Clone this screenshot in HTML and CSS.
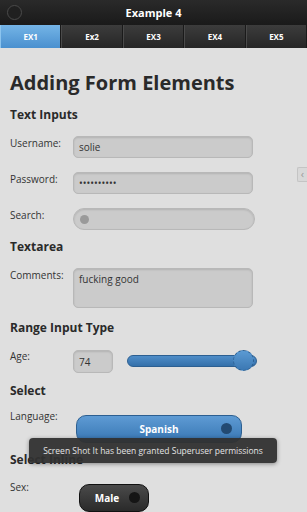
FILE: index.html
```html
<!DOCTYPE html>
<html>
<head>
    <title>Example 4</title>
    <link rel="stylesheet" href="styles.css">
</head>
<body>
    <!-- Header -->
    <div class="header">
        <span class="header-dot"></span>
        <h1>Example 4</h1>
    </div>

    <!-- Tabs -->
    <div class="tabs">
        <a href="#" class="tab active">EX1</a>
        <a href="#" class="tab">Ex2</a>
        <a href="#" class="tab">EX3</a>
        <a href="#" class="tab">EX4</a>
        <a href="#" class="tab">EX5</a>
    </div>

    <div class="content">
        <h2>Adding Form Elements</h2>

        <h3>Text Inputs</h3>
        <div class="field first">
            <label>Username:</label>
            <input type="text" class="text-input" value="solie">
        </div>
        <div class="field">
            <label>Password:</label>
            <input type="password" class="text-input" value="1234567890">
        </div>
        <div class="field">
            <label>Search:</label>
            <div class="search-input"><span class="search-dot"></span></div>
        </div>

        <h3 class="section">Textarea</h3>
        <div class="field first">
            <label>Comments:</label>
            <textarea class="textarea">fucking good</textarea>
        </div>

        <h3 class="section range-title">Range Input Type</h3>
        <div class="field first">
            <label>Age:</label>
            <input type="text" class="text-input age-input" value="74">
            <div class="slider">
                <div class="slider-track"></div>
                <span class="slider-thumb"></span>
            </div>
        </div>

        <h3 class="section select-title">Select</h3>
        <div class="field select-row">
            <label>Language:</label>
            <div class="select-btn">Spanish<span class="btn-dot"></span></div>
        </div>

        <h3 class="section">Select Inline</h3>
        <div class="field sex-row">
            <label>Sex:</label>
            <div class="inline-btn">Male<span class="btn-dot"></span></div>
        </div>
    </div>

    <!-- Side handle -->
    <div class="side-handle">&lsaquo;</div>

    <!-- Toast -->
    <div class="toast">Screen Shot It has been granted Superuser permissions</div>
</body>
</html>
```

FILE: styles.css
```css
body {
    margin: 0;
    width: 307px;
    height: 512px;
    overflow: hidden;
    background-color: #dfdfdf;
    font-family: "Open Sans", "DejaVu Sans", sans-serif;
    color: #2a2a2a;
    position: relative;
}
.header {
    height: 25px;
    background: linear-gradient(#2a2a2a, #1a1a1a);
    display: flex;
    align-items: center;
    justify-content: center;
    position: relative;
}
.header h1 {
    margin: 0;
    font-size: 11px;
    font-weight: bold;
    color: #fff;
}
.header-dot {
    position: absolute;
    left: 7px;
    top: 5px;
    width: 13px;
    height: 13px;
    border-radius: 50%;
    border: 1px solid #4a4a4a;
    background: #202020;
}
.tabs {
    display: flex;
    height: 23px;
    background: #2a2a2a;
}
.tab {
    flex: 1;
    display: flex;
    align-items: center;
    justify-content: center;
    font-size: 8px;
    font-weight: bold;
    color: #fff;
    text-decoration: none;
    background: linear-gradient(#3c3c3c, #262626);
    border-left: 1px solid #4a4a4a;
    border-right: 1px solid #1a1a1a;
}
.tab.active {
    background: linear-gradient(#74b4e6, #4a90cf);
    border-left-color: #8cc4ee;
}
.content {
    padding: 0 10px;
}
h2 {
    margin: 23px 0 0;
    font-size: 20px;
    line-height: 24px;
    font-weight: bold;
}
h3 {
    margin: 12px 0 0;
    font-size: 12px;
    line-height: 16px;
    font-weight: bold;
}
h3.section {
    margin-top: 9px;
}
h3.range-title {
    margin-top: 12px;
}
h3.select-title {
    margin-top: 10px;
}
.field {
    display: flex;
    align-items: flex-start;
    margin-top: 14px;
}
.field.first {
    margin-top: 13px;
}
.field label {
    width: 63px;
    flex-shrink: 0;
    font-size: 10px;
    line-height: 14px;
    color: #333;
}
.text-input,
.textarea {
    box-sizing: border-box;
    width: 180px;
    height: 22px;
    margin: 0;
    padding: 0 5px;
    border: 1px solid #b8b8b8;
    border-radius: 5px;
    background: #cbcbcb;
    box-shadow: inset 0 1px 2px rgba(0, 0, 0, 0.12);
    font-family: "Open Sans", "DejaVu Sans", sans-serif;
    font-size: 10px;
    color: #333;
    outline: none;
}
.textarea {
    height: 40px;
    padding: 3px 5px;
    resize: none;
    line-height: 14px;
}
.search-input {
    box-sizing: border-box;
    width: 182px;
    height: 22px;
    border: 1px solid #b8b8b8;
    border-radius: 11px;
    background: #cbcbcb;
    box-shadow: inset 0 1px 2px rgba(0, 0, 0, 0.12);
    display: flex;
    align-items: center;
    padding-left: 6px;
}
.search-dot {
    width: 9px;
    height: 9px;
    border-radius: 50%;
    background: #9a9a9a;
}
.age-input {
    width: 40px;
    height: 23px;
    margin-top: 1px;
}
.slider {
    position: relative;
    width: 130px;
    height: 23px;
    margin-left: 14px;
    margin-top: 1px;
}
.slider-track {
    box-sizing: border-box;
    margin-top: 5px;
    height: 12px;
    border-radius: 6px;
    border: 1px solid #2c5f91;
    background: linear-gradient(#4f8dc8, #3470aa);
}
.slider-thumb {
    position: absolute;
    left: 106px;
    top: 0;
    box-sizing: border-box;
    width: 21px;
    height: 21px;
    border-radius: 50%;
    border: 1px dashed #2c5f91;
    background: linear-gradient(#5b9ad3, #3b78b3);
}
.select-row {
    margin-top: 10px;
}
.select-btn {
    box-sizing: border-box;
    position: relative;
    width: 166px;
    height: 28px;
    margin: 6px 0 0 3px;
    border: 1px solid #2c5f91;
    border-radius: 10px;
    background: linear-gradient(#5e9bd4, #3876b3);
    color: #fff;
    font-size: 10px;
    font-weight: bold;
    display: flex;
    align-items: center;
    justify-content: center;
}
.btn-dot {
    position: absolute;
    right: 9px;
    top: 50%;
    width: 11px;
    height: 11px;
    margin-top: -6px;
    border-radius: 50%;
    background: #234a72;
}
.sex-row {
    margin-top: 12px;
}
.inline-btn {
    box-sizing: border-box;
    position: relative;
    width: 70px;
    height: 28px;
    margin: 4px 0 0 6px;
    padding-right: 14px;
    border: 1px solid #111;
    border-radius: 10px;
    background: linear-gradient(#4a4a4a, #2a2a2a);
    color: #fff;
    font-size: 10px;
    font-weight: bold;
    display: flex;
    align-items: center;
    justify-content: center;
}
.inline-btn .btn-dot {
    background: #151515;
    right: 8px;
}
.side-handle {
    position: absolute;
    right: 0;
    top: 167px;
    width: 9px;
    height: 13px;
    border: 1px solid #c4c4c4;
    border-right: none;
    border-radius: 2px 0 0 2px;
    background: #d8d8d8;
    color: #9a9a9a;
    font-size: 11px;
    line-height: 12px;
    text-align: center;
}
.toast {
    position: absolute;
    left: 29px;
    top: 438px;
    width: 248px;
    height: 25px;
    border-radius: 4px;
    background: rgba(48, 48, 48, 0.95);
    box-shadow: 0 1px 4px rgba(0, 0, 0, 0.4);
    color: #e4e4e4;
    font-size: 8.5px;
    display: flex;
    align-items: center;
    justify-content: center;
    white-space: nowrap;
}
```
